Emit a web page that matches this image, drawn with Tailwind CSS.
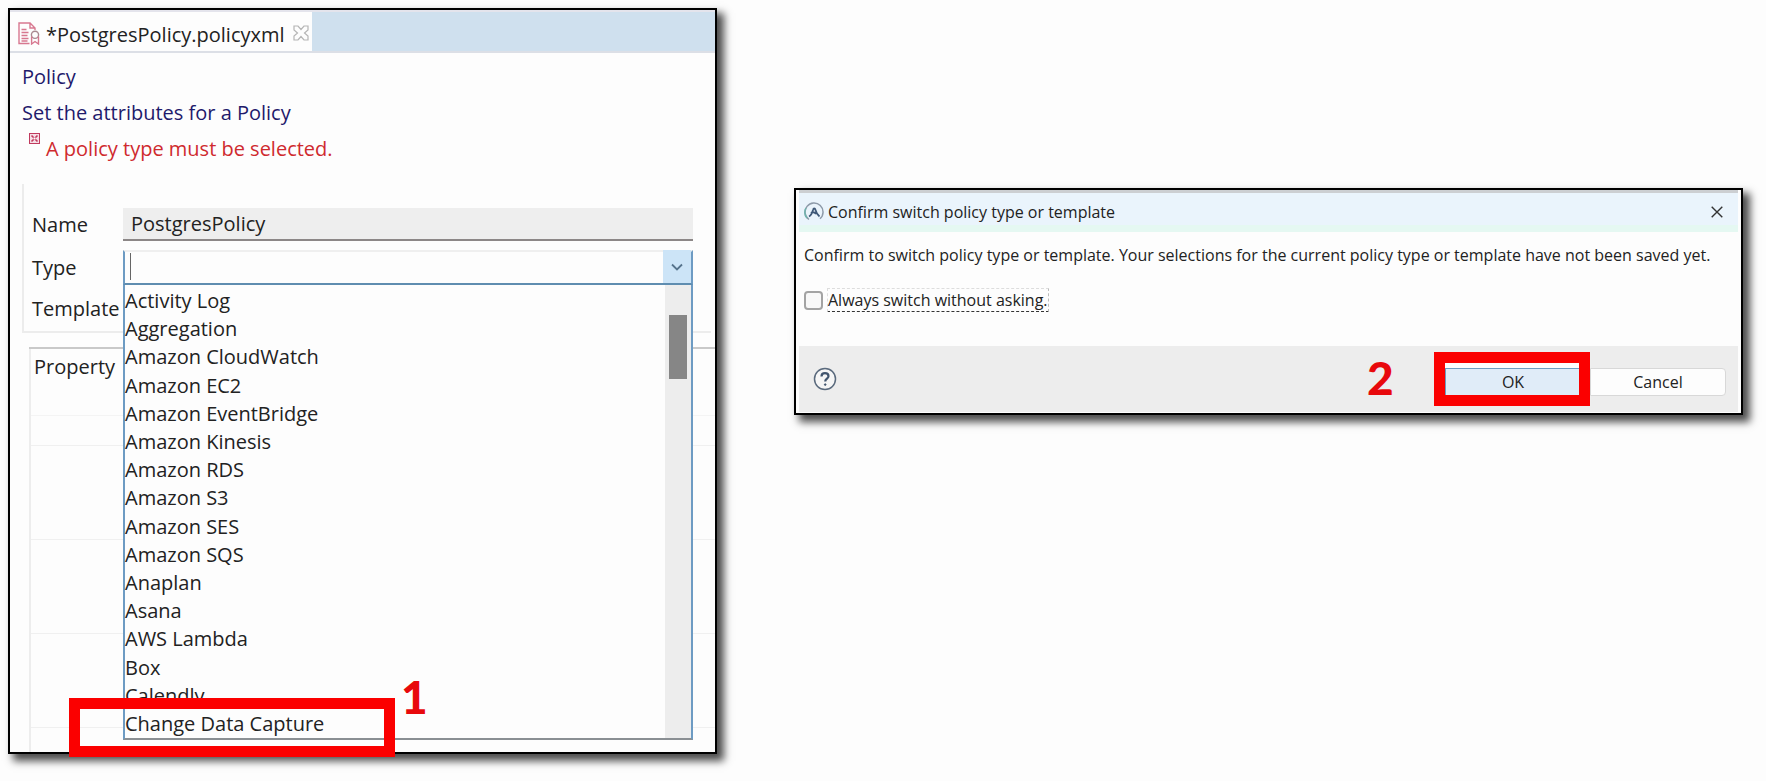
<!DOCTYPE html>
<html lang="en">

<head>
    <meta charset="UTF-8">
    <meta name="viewport" content="width=device-width, initial-scale=1.0">
    <title>PostgresPolicy.policyxml</title>
    <script src="https://cdn.jsdelivr.net/npm/@tailwindcss/browser@4"></script>
</head>

<body class="min-h-screen bg-[#fdfdfd] font-['Open_Sans',sans-serif] text-[#222]">

    <main class="grid grid-cols-[709fr_949fr] items-start gap-[77px] pt-2 pr-[23px] pb-6 pl-2">

        <!-- Policy editor -->
        <section class="border-2 border-black bg-[#fdfdfd] text-xl shadow-[6px_6px_8px_1px_rgba(0,0,0,0.7)]">

            <!-- Editor tabs -->
            <div class="flex h-[43px] border-t-2 border-b-2 border-t-[#e4e4ec] border-b-[#dcdfe6] bg-[#cfe0ee]">
                <div class="flex w-[302px] items-center bg-[#fdfdfd] pt-1.5 pl-2 whitespace-nowrap">
                    <svg class="mr-1.5 mb-0.5 h-[23px] w-[22px] shrink-0" viewBox="0 0 22 23" fill="none" stroke="#d77890" stroke-width="1.4">
                        <path d="M11.500 21.500H1V1h11l5 5v2M12 1v5h5" />
                        <path d="M3.500 7.500h5M3.500 10.500h7M3.500 13.500h6M3.500 16.500h7M3.500 19h6" />
                        <circle cx="17" cy="12.800" r="3.600" stroke="#a98a90" />
                        <path d="M13.600 14.500v7.500l3.400-2.500 3.500 2.500v-7.500" />
                    </svg>
                    <span>*PostgresPolicy.policyxml</span>
                    <button type="button" aria-label="Close tab" class="ml-2 -mt-1">
                        <svg class="h-4 w-4" viewBox="0 0 16 16" fill="none" stroke="#b5b5b5" stroke-width="1.2">
                            <path d="M1 1h4l3 3.500L11 1h4v4l-3.500 3L15 11v4h-4l-3-3.500L5 15H1v-4l3.500-3L1 5z" />
                        </svg>
                    </button>
                </div>
            </div>

            <!-- Heading and validation message -->
            <div class="pt-1.5 pl-3 text-[#1f1a6b]">
                <h1 class="leading-9">Policy</h1>
                <p class="leading-9">Set the attributes for a Policy</p>
                <p class="flex pl-[7px] leading-9 text-[#cf2a2e]">
                    <svg class="mt-0.5 mr-1.5 h-[11px] w-[11px] shrink-0" viewBox="0 0 11 11" fill="none">
                        <rect x="0.500" y="0.500" width="10" height="10" fill="#f6dfe6" stroke="#c03a5e" />
                        <path d="M2.500 2.500l6 6M8.500 2.500l-6 6" stroke="#c03a5e" stroke-width="1.600" />
                        <rect x="4.500" y="4.500" width="2" height="2" fill="#fff" />
                    </svg>
                    A policy type must be selected.
                </p>
            </div>

            <!-- Policy attributes -->
            <form class="mt-[17px] mr-1 ml-3 border-b-2 border-l-2 border-[#ececec] pt-6 pr-[18px] pb-[7px] pl-2">
                <div class="grid grid-cols-[91px_1fr] items-center">
                    <label for="name">Name</label>
                    <input id="name" type="text" value="PostgresPolicy" readonly
                           class="h-[33px] w-full border-b-2 border-[#8c8787] bg-[#eeeeee] pl-2 focus:outline-none">
                </div>

                <div class="mt-[9px] grid grid-cols-[91px_1fr] items-center">
                    <label for="type">Type</label>
                    <div class="relative">
                        <select id="type" class="block h-[35px] w-full appearance-none border-x-2 border-t-2 border-b-2 border-x-[#6d9bc3] border-t-[#efefef] border-b-[#5f8db0] bg-[#fdfdfd] focus:outline-none">
                            <option></option>
                        </select>
                        <span class="absolute top-[3px] left-[7px] h-[27px] w-px bg-[#666]"></span>
                        <span class="pointer-events-none absolute top-0 right-0.5 flex h-[33px] w-7 items-center justify-center bg-[#cce4f7]">
                            <svg class="h-2 w-3" viewBox="0 0 12 8" fill="none" stroke="#56738c" stroke-width="1.800">
                                <path d="M1 1.500l5 5 5-5" />
                            </svg>
                        </span>

                        <!-- Opened list of policy types -->
                        <div class="absolute top-full right-0 left-0 z-10 flex h-[455px] border-x-2 border-b-2 border-x-[#6d9bc3] border-b-[#8a8f93] bg-[#fdfdfd]">
                            <ul role="listbox" aria-label="Type" class="flex flex-1 flex-col pt-0.5 leading-7">
                                <li role="option" class="flex flex-1 items-center">Activity Log</li>
                                <li role="option" class="flex flex-1 items-center">Aggregation</li>
                                <li role="option" class="flex flex-1 items-center">Amazon CloudWatch</li>
                                <li role="option" class="flex flex-1 items-center">Amazon EC2</li>
                                <li role="option" class="flex flex-1 items-center">Amazon EventBridge</li>
                                <li role="option" class="flex flex-1 items-center">Amazon Kinesis</li>
                                <li role="option" class="flex flex-1 items-center">Amazon RDS</li>
                                <li role="option" class="flex flex-1 items-center">Amazon S3</li>
                                <li role="option" class="flex flex-1 items-center">Amazon SES</li>
                                <li role="option" class="flex flex-1 items-center">Amazon SQS</li>
                                <li role="option" class="flex flex-1 items-center">Anaplan</li>
                                <li role="option" class="flex flex-1 items-center">Asana</li>
                                <li role="option" class="flex flex-1 items-center">AWS Lambda</li>
                                <li role="option" class="flex flex-1 items-center">Box</li>
                                <li role="option" class="flex flex-1 items-center">Calendly</li>
                                <li role="option" class="relative flex flex-1 items-center">
                                    Change Data Capture
                                    <span class="absolute -top-3 -left-14 h-[59px] w-[326px] border-[11px] border-[#fb0000]"></span>
                                    <span class="absolute -top-9 left-[276px] font-['Lato',sans-serif] text-[46px] leading-none font-black text-[#e8090c]">1</span>
                                </li>
                            </ul>
                            <div class="w-[26px] bg-[#ededed] pt-[30px]">
                                <div class="mx-auto h-16 w-[18px] bg-[#868686]"></div>
                            </div>
                        </div>
                    </div>
                </div>

                <div class="mt-2 flex h-[31px] items-center">Template</div>
            </form>

            <!-- Policy properties -->
            <div class="mt-3.5 pl-[19px]">
                <table class="w-full border-t-2 border-l-2 border-t-[#c9c9c9] border-l-[#ededed]">
                    <thead>
                        <tr class="h-[67px] border-b border-[#f4f4f4]">
                            <th class="pt-1 pl-[3px] text-left align-top font-normal">Property</th>
                        </tr>
                    </thead>
                    <tbody>
                        <tr class="h-[30px] border-b border-[#f0f0f0]"><td></td></tr>
                        <tr class="h-[94px] border-b border-[#f0f0f0]"><td></td></tr>
                        <tr class="h-[94px] border-b border-[#f0f0f0]"><td></td></tr>
                        <tr class="h-[94px] border-b border-[#f0f0f0]"><td></td></tr>
                        <tr class="h-[25px]"><td></td></tr>
                    </tbody>
                </table>
            </div>
        </section>

        <!-- Confirmation dialog -->
        <section role="dialog" aria-labelledby="dialogTitle"
                 class="mt-[180px] border-2 border-black bg-[#fdfdfd] text-base shadow-[6px_6px_8px_1px_rgba(0,0,0,0.7)]">

            <div class="mx-[3px] flex h-[42px] items-center border-t-[3px] border-b-[7px] border-t-[#cccfd2] border-b-[#e5f8f2] bg-[#eaf4fc] pt-1.5 pl-[5px]">
                <svg class="mr-1 h-5 w-5 shrink-0" viewBox="0 0 20 20" fill="none">
                    <path d="M5 17.500A9 9 0 1 1 16 16.800" stroke="#8d9aa9" stroke-width="1.500" />
                    <path d="M2 6a9 9 0 0 0 1 10" stroke="#6fb3ad" stroke-width="1.500" />
                    <path d="M5 14.500c2-1 3-3 4-6.500.5-2 2-2 2.500 0 .8 3 2 5 4 6.500M7 11c2-1.500 3.500-1 5 1" stroke="#3f5878" stroke-width="1.800" />
                </svg>
                <h2 id="dialogTitle">Confirm switch policy type or template</h2>
                <button type="button" aria-label="Close" class="mr-[15px] ml-auto">
                    <svg class="h-3 w-3" viewBox="0 0 12 12" fill="none" stroke="#333" stroke-width="1.400">
                        <path d="M0.700 0.700l10.600 10.600M11.300 0.700L0.700 11.300" />
                    </svg>
                </button>
            </div>

            <div class="px-2 pt-[11px] pb-[34px]">
                <p class="leading-6 whitespace-nowrap">Confirm to switch policy type or template. Your selections for the current policy type or template have not been saved yet.</p>
                <div class="mt-[21px] flex items-center">
                    <input id="always" type="checkbox" class="mr-1 h-[19px] w-[19px] appearance-none rounded border-2 border-[#a3a3a3] bg-[#f8f8f8]">
                    <label for="always" class="border border-dashed border-t-[#ddd] border-r-[#bbb] border-b-[#333] border-l-[#ddd] leading-[22px]">Always switch without asking.</label>
                </div>
            </div>

            <!-- Dialog buttons -->
            <div class="mx-[3px] mb-px flex h-[66px] items-center bg-[#ededed] pr-3 pl-3.5">
                <button type="button" aria-label="Help">
                    <svg class="h-6 w-6" viewBox="0 0 24 24" fill="none" stroke="#5a6a7d">
                        <circle cx="12" cy="12" r="10.500" fill="#f6f6f6" stroke-width="1.500" />
                        <path d="M8.500 9.500c0-2 1.500-3.300 3.500-3.300s3.500 1.200 3.500 3c0 2.300-3.300 2.500-3.300 5.300" stroke="#41556e" stroke-width="2.200" />
                        <circle cx="12.200" cy="17.600" r="0.800" fill="#41556e" stroke="#41556e" />
                    </svg>
                </button>
                <div class="mt-1.5 ml-auto flex gap-[9px]">
                    <div class="relative">
                        <button type="button" class="block h-7 w-[136px] border border-[#6f9cc0] bg-[#e0ecf8] shadow-[0_-5px_0_#fdfdfd]">OK</button>
                        <span class="pointer-events-none absolute -top-4 -right-[9px] -bottom-2.5 -left-[11px] border-[11px] border-[#fb0000]"></span>
                        <span class="absolute -top-[13px] -left-[78px] font-['Lato',sans-serif] text-[46px] leading-none font-black text-[#e8090c]">2</span>
                    </div>
                    <button type="button" class="h-7 w-[136px] rounded-r border border-[#d8d8d8] bg-[#fdfdfd]">Cancel</button>
                </div>
            </div>
        </section>
    </main>

</body>

</html>
